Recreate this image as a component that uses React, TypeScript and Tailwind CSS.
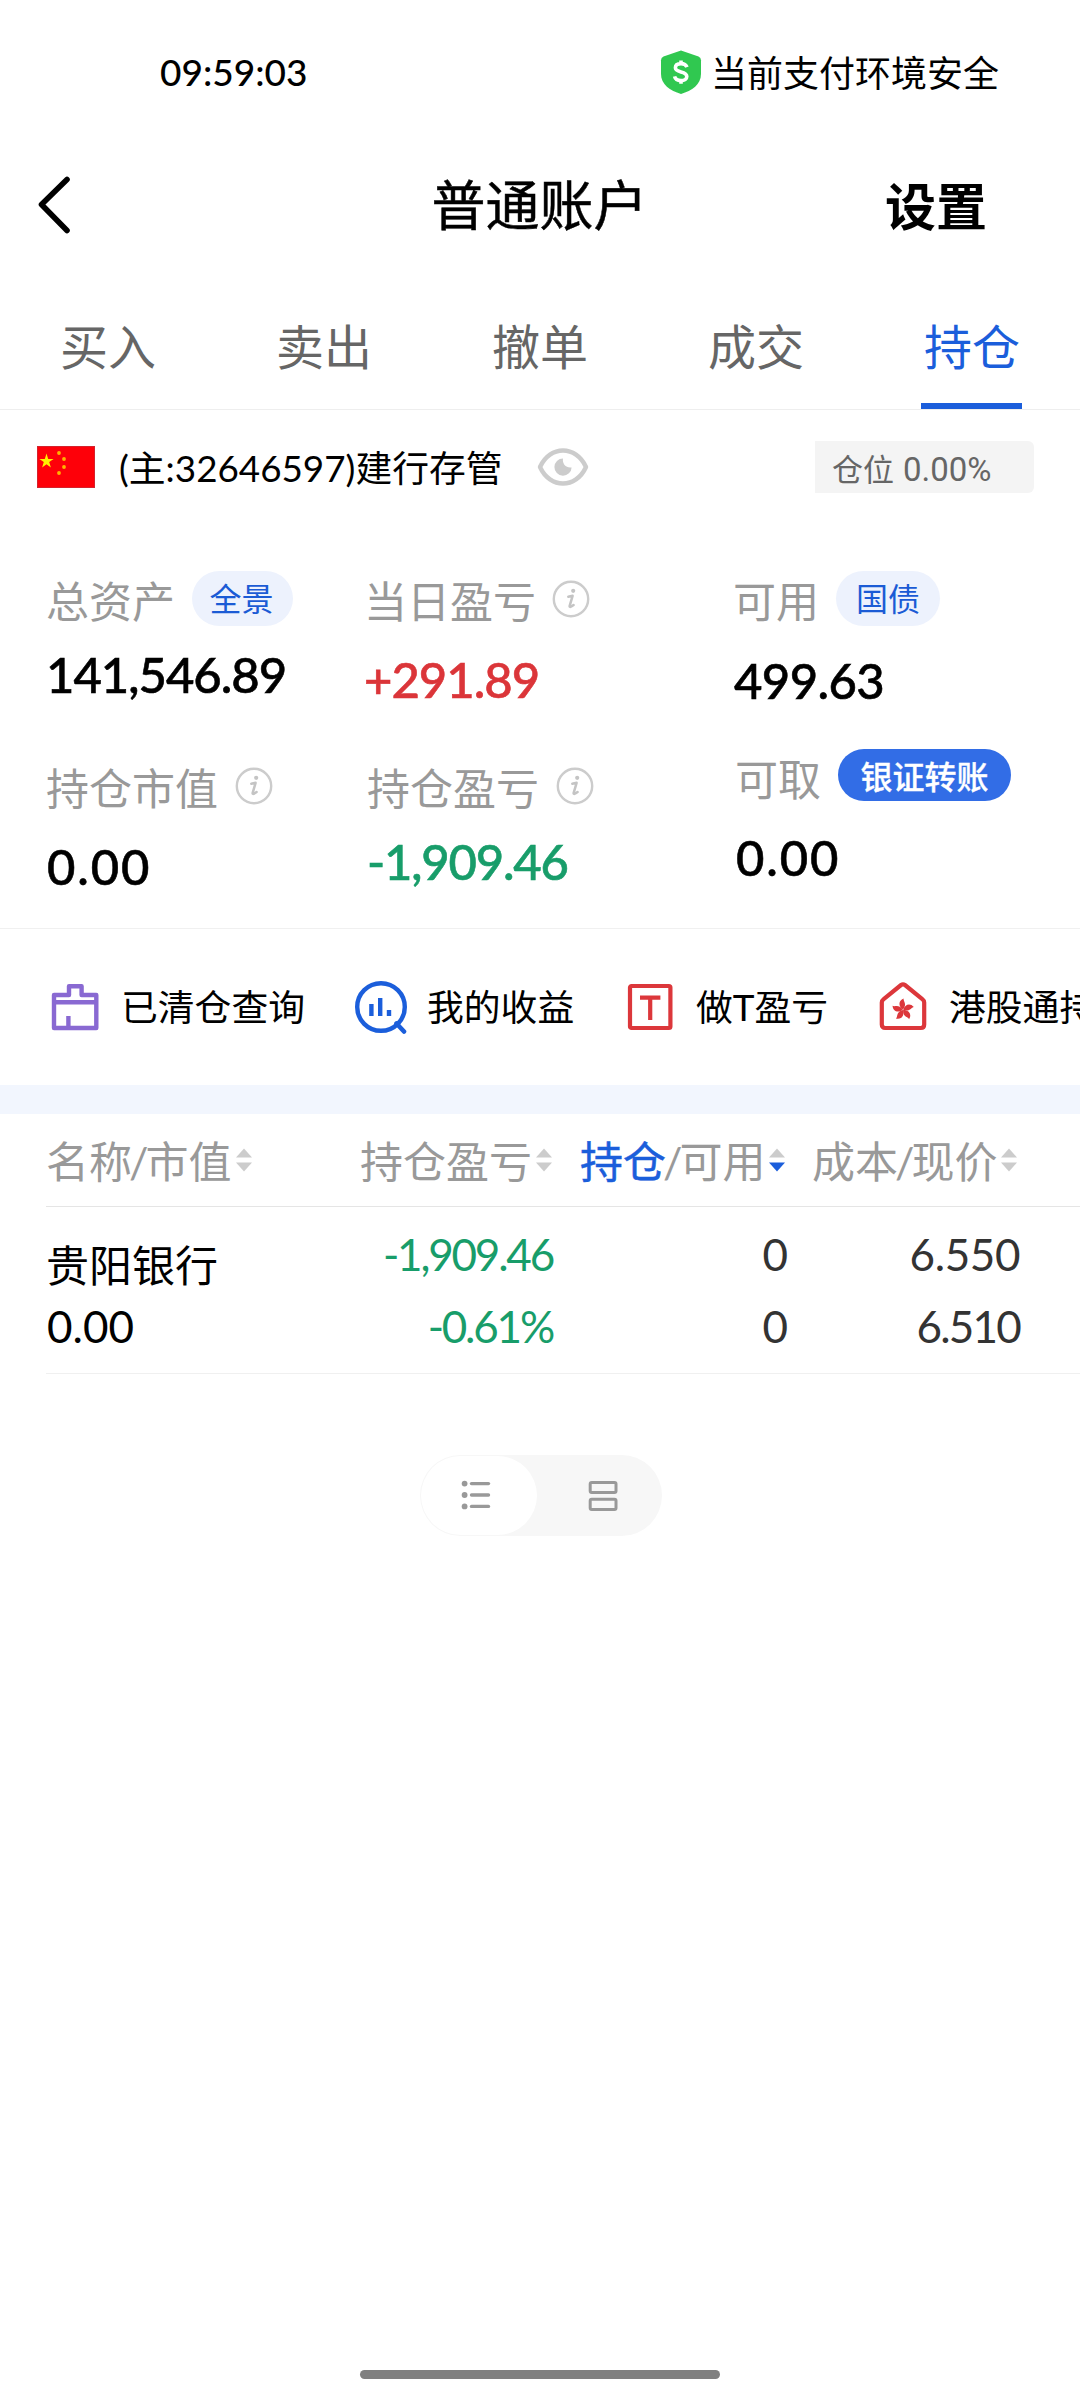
import React from 'react';
import clsx from 'clsx';

function ShieldIcon() {
  return (
    <svg width="42" height="44" viewBox="0 0 42 44" className="shrink-0 -translate-y-px">
      <path d="M21 0.5 L38.5 6.6 Q41 7.6 41 10.2 V24 C41 34.5 32 40.5 21 44 C10 40.5 1 34.5 1 24 V10.2 Q1 7.6 3.5 6.6 Z" fill="#30c850" />
      <path d="M27 17.2 C26 14.6 24 13.6 21 13.6 C17.6 13.6 15.4 15.2 15.4 17.8 C15.4 23.4 26.8 20.4 26.8 26.4 C26.8 29 24.4 30.6 21 30.6 C17.6 30.6 15.2 29.2 14.6 26.4 M21 10.5 V14 M21 30 V33.8" fill="none" stroke="#fff" strokeWidth="3.6" />
    </svg>
  );
}

function FlagIcon() {
  const small = [[22, 7], [27, 13], [27, 21], [22, 27]];
  return (
    <svg width="58" height="42" viewBox="0 0 58 42" className="shrink-0 -translate-y-px">
      <rect width="58" height="42" fill="#fe0009" />
      <rect x="0.5" y="0.5" width="57" height="41" fill="none" stroke="#d5222c" strokeWidth="1" />
      <path d="M9.5 7.5 L11.2 12.9 H16.6 L12.2 16.1 L13.9 21.6 L9.5 18.3 L5.1 21.6 L6.8 16.1 L2.4 12.9 H7.8 Z" fill="#fff000" />
      {small.map(([x, y], i) => (
        <circle key={i} cx={x} cy={y} r="1.9" fill="#ffb400" />
      ))}
    </svg>
  );
}

function EyeIcon() {
  return (
    <svg width="52" height="38" viewBox="0 0 52 38" className="shrink-0 -translate-y-px">
      <path d="M3 19 C8 8 17 2.5 26 2.5 C35 2.5 44 8 49 19 C44 30 35 35.5 26 35.5 C17 35.5 8 30 3 19 Z" fill="none" stroke="#ccc" strokeWidth="4.4" strokeLinejoin="round" />
      <path d="M26 10.5 A8.6 8.6 0 1 0 34.6 19.4 C29.5 20.4 25 16 26 10.5 Z" fill="#ccc" />
    </svg>
  );
}

function InfoIcon() {
  return (
    <svg width="38" height="38" viewBox="0 0 38 38" className="shrink-0">
      <circle cx="19" cy="19" r="17.2" fill="none" stroke="#ccc" strokeWidth="2.4" />
      <circle cx="21.2" cy="10.8" r="2.1" fill="#c4c4c4" />
      <path d="M16.3 16.8 L20.6 15.8 L17.6 26.2 Q17.6 28 21.6 25" fill="none" stroke="#c4c4c4" strokeWidth="2.5" strokeLinecap="round" strokeLinejoin="round" />
    </svg>
  );
}

function ClearedIcon() {
  return (
    <svg width="48" height="48" viewBox="0 0 48 48" className="shrink-0">
      <path d="M3 45 V12 H18 V3.2 H30.6 V12 H45.3 V45 Z M3 19.3 H45.3 M17.4 33 V45" fill="none" stroke="#8969d2" strokeWidth="4.4" strokeLinejoin="round" />
    </svg>
  );
}

function ProfitIcon() {
  return (
    <svg width="54" height="54" viewBox="0 0 54 54" className="shrink-0">
      <circle cx="27" cy="27" r="23.8" fill="none" stroke="#1b5edb" strokeWidth="4.4" />
      <path d="M42.5 43.5 L50 51.5" stroke="#1b5edb" strokeWidth="4.6" strokeLinecap="round" />
      <path d="M17.4 24 V36 M26.2 18 V36 M35 30 V36" stroke="#1b5edb" strokeWidth="4.4" />
    </svg>
  );
}

function TIcon() {
  return (
    <svg width="46" height="48" viewBox="0 0 46 48" className="shrink-0">
      <rect x="3" y="3" width="40.4" height="42" rx="1.5" fill="none" stroke="#dc373b" strokeWidth="4.2" />
      <path d="M13 14.6 H33.4 M23.2 14.6 V37" stroke="#dc373b" strokeWidth="4.2" />
    </svg>
  );
}

function HkIcon() {
  return (
    <svg width="48" height="50" viewBox="0 0 48 50" className="shrink-0 -translate-y-px">
      <path d="M2.8 21.5 Q2.8 19.6 4.4 18.4 L22 4 Q24 2.6 26 4 L43.6 18.4 Q45.2 19.6 45.2 21.5 V43.5 Q45.2 47 41.8 47 H6.2 Q2.8 47 2.8 43.5 Z" fill="none" stroke="#dc373b" strokeWidth="4.2" />
      {[0, 72, 144, 216, 288].map((a) => (
        <path key={a} d="M24 28.6 C19.2 25.4 19.2 19.8 24.6 17.6 C24 20.4 28.6 23 24 28.6 Z" fill="#dc373b" transform={`rotate(${a} 24 28.8)`} />
      ))}
    </svg>
  );
}

function SortIcon({ down = false }: { down?: boolean }) {
  return (
    <svg width="18" height="24" viewBox="0 0 18 24" className="shrink-0">
      <path d="M9 0.5 L17 9.5 H1 Z" fill="#ccc" />
      <path d="M1 14.5 H17 L9 23.5 Z" fill={down ? '#1b5edb' : '#ccc'} />
    </svg>
  );
}

const tabs = ['买入', '卖出', '撤单', '成交', '持仓'];

function Label({ children }: { children: React.ReactNode }) {
  return <span className="pt-[6px] text-[43px] leading-[40px] text-[#999]">{children}</span>;
}

function Value({ children, className }: { children: React.ReactNode; className?: string }) {
  return <div className={clsx('-translate-y-px text-[49px] leading-[50px] font-medium [-webkit-text-stroke:0.6px_currentColor]', className)}>{children}</div>;
}

function Slash() {
  return <span className="-mx-[3px]">/</span>;
}

export default function App() {
  return (
    <div className="flex h-[2400px] w-[1080px] flex-col overflow-hidden bg-white font-['Lato','Noto_Sans_CJK_SC',sans-serif] whitespace-nowrap text-black">
      {/* status bar */}
      <div className="flex h-[145px] items-center justify-between pr-[81px] pl-[160px]">
        <span className="pb-[2px] text-[37px] leading-none font-medium">09:59:03</span>
        <div className="flex items-center gap-[9px]">
          <ShieldIcon />
          <span className="pt-px text-[36px] leading-none">当前支付环境安全</span>
        </div>
      </div>

      {/* title */}
      <header className="grid h-[122px] grid-cols-[1fr_auto_1fr] items-center pr-[93px] pl-[36px]">
        <svg width="36" height="60" viewBox="0 0 36 60" className="-translate-y-px">
          <path d="M31 4.5 L5.5 29.5 L31 55.5" fill="none" stroke="#000" strokeWidth="5.6" strokeLinecap="round" strokeLinejoin="round" />
        </svg>
        <h1 className="translate-x-[28px] text-[54px] leading-none [-webkit-text-stroke:0.5px_currentColor]">普通账户</h1>
        <span className="justify-self-end text-[51px] leading-none font-bold">设置</span>
      </header>

      {/* tabs */}
      <nav className="grid h-[143px] grid-cols-5 border-b border-[#eee]">
        {tabs.map((tab, i) => (
          <div key={tab} className={clsx('flex flex-col items-center justify-between pt-[50px] text-[48px] leading-[60px]', i === 4 ? 'text-[#1b5edb]' : 'text-[#666]')}>
            {tab}
            {i === 4 && <div className="mr-[2px] h-[6px] w-[101px] bg-[#1b5edb]" />}
          </div>
        ))}
      </nav>

      {/* account */}
      <div className="flex h-[118px] items-center pr-[46px] pb-[3px] pl-[37px]">
        <FlagIcon />
        <span className="ml-[24px] pt-px text-[36.8px] leading-none">(主:32646597)建行存管</span>
        <span className="ml-[34px]">
          <EyeIcon />
        </span>
        <div className="ml-auto flex h-[52px] w-[219px] -translate-y-px items-center gap-[9px] rounded-r-[6px] bg-[#f4f4f4] pt-[5px] pl-[17px] text-[#666]">
          <span className="text-[31px] leading-none">仓位</span>
          <span className="font-['Roboto',sans-serif] text-[33px] leading-none">0.00%</span>
        </div>
      </div>

      {/* assets */}
      <section className="flex h-[401px] border-b border-[#f0f0f0] pt-[43px] pl-[46px]">
        <div className="w-[318px]">
          <div className="flex h-[55px] items-center">
            <Label>总资产</Label>
            <span className="ml-[17px] flex h-[55px] w-[101px] items-center justify-center rounded-full bg-[#edf2fd] pt-px pr-[2px] text-[32px] leading-none text-[#1b5bd5]">全景</span>
          </div>
          <Value className="mt-[24px] tracking-[-1px]">141,546.89</Value>
          <div className="mt-[66px] flex h-[40px] items-center">
            <Label>持仓市值</Label>
            <span className="ml-[17px]"><InfoIcon /></span>
          </div>
          <Value className="mt-[36px] pl-px tracking-[1.9px]">0.00</Value>
        </div>

        <div className="w-[369px]">
          <div className="flex h-[55px] items-center">
            <Label>当日盈亏</Label>
            <span className="ml-[16px]"><InfoIcon /></span>
          </div>
          <Value className="mt-[29px] tracking-[-1px] text-[#db3539]">+291.89</Value>
          <div className="mt-[61px] flex h-[40px] items-center pl-[3px]">
            <Label>持仓盈亏</Label>
            <span className="ml-[17px]"><InfoIcon /></span>
          </div>
          <Value className="mt-[31px] pl-[3px] tracking-[-1.2px] text-[#189d6a]">-1,909.46</Value>
        </div>

        <div>
          <div className="flex h-[55px] items-center">
            <Label>可用</Label>
            <span className="ml-[17px] flex h-[55px] w-[104px] items-center justify-center rounded-full bg-[#edf2fd] pt-px text-[32px] leading-none text-[#1b5bd5]">国债</span>
          </div>
          <Value className="mt-[30px] pl-px tracking-[-0.6px]">499.63</Value>
          <div className="mt-[43px] flex h-[52px] items-center pl-[2px]">
            <div className="flex pt-[4px]"><Label>可取</Label></div>
            <span className="ml-[17px] flex h-[52px] w-[173px] items-center justify-center rounded-full bg-[#326de6] pt-[3px] text-[32px] leading-none font-medium text-white [-webkit-text-stroke:0.3px_currentColor]">银证转账</span>
          </div>
          <Value className="mt-[32px] pl-[3px] tracking-[1.9px]">0.00</Value>
        </div>
      </section>

      {/* shortcuts */}
      <div className="flex h-[156px] items-center overflow-hidden pl-[51px] text-[36.8px] leading-none">
        <div className="flex w-[303px] shrink-0 items-center gap-[22px]">
          <ClearedIcon />
          <span>已清仓查询</span>
        </div>
        <div className="flex w-[273px] shrink-0 items-center gap-[19px]">
          <ProfitIcon />
          <span>我的收益</span>
        </div>
        <div className="flex w-[252px] shrink-0 items-center gap-[23px]">
          <TIcon />
          <span>做T盈亏</span>
        </div>
        <div className="flex shrink-0 items-center gap-[22px]">
          <HkIcon />
          <span>港股通持仓</span>
        </div>
      </div>

      <div className="h-[29px] bg-[#f2f6fe]" />

      {/* holdings */}
      <div className="ml-[46px] flex h-[93px] items-center border-b border-[#e5e5e5] text-[43px] leading-none text-[#999]">
        <div className="flex w-[314px] items-center gap-[4px]">
          <span className="pt-[3px]">名称<Slash />市值</span>
          <SortIcon />
        </div>
        <div className="flex w-[220px] items-center gap-[3px]">
          <span className="pt-[3px]">持仓盈亏</span>
          <SortIcon />
        </div>
        <div className="flex w-[232px] items-center gap-[3px]">
          <span className="pt-[3px]"><span className="text-[#1b5edb] [-webkit-text-stroke:0.5px_currentColor]">持仓</span><Slash />可用</span>
          <SortIcon down />
        </div>
        <div className="flex items-center gap-[3px]">
          <span className="pt-[3px]">成本<Slash />现价</span>
          <SortIcon />
        </div>
      </div>
      <div className="ml-[46px] flex h-[167px] border-b border-[#f0f0f0] text-[44px] leading-[50px]">
        <div className="w-[209px] pt-[34px]">
          <div className="text-[43px]">贵阳银行</div>
          <div className="mt-[10px] pl-px">0.00</div>
        </div>
        <div className="flex w-[298px] flex-col items-end gap-[22px] pt-[22px] text-[#189d6a]">
          <span className="tracking-[-2.2px]">-1,909.46</span>
          <span className="tracking-[-2.2px]">-0.61%</span>
        </div>
        <div className="flex w-[235px] flex-col items-end gap-[22px] pt-[22px] text-[#333]">
          <span>0</span>
          <span>0</span>
        </div>
        <div className="flex w-[232px] flex-col items-end gap-[22px] pt-[22px] text-[#333]">
          <span className="tracking-[-0.4px]">6.550</span>
          <span className="tracking-[-1.8px]">6.510</span>
        </div>
      </div>

      {/* list / card switch */}
      <div className="mt-[81px] ml-[420px] flex h-[81px] w-[242px] items-center rounded-full bg-[#f7f7f7] p-px">
        <div className="flex h-[79px] w-[116px] items-center justify-center rounded-full bg-white">
          <svg width="30" height="30" viewBox="0 0 30 30" className="mr-[6px] mb-[2px]">
            {[3.6, 15, 26.4].map((y) => (
              <g key={y}>
                <circle cx="3.6" cy={y} r="2.9" fill="#999" />
                <path d={`M10.5 ${y} H27.5`} stroke="#999" strokeWidth="3.4" strokeLinecap="round" />
              </g>
            ))}
          </svg>
        </div>
        <svg width="30" height="32" viewBox="0 0 30 32" className="ml-[51px]">
          <rect x="2.2" y="2.4" width="25.8" height="10.2" rx="1.5" fill="none" stroke="#999" strokeWidth="3" />
          <rect x="2.2" y="19.2" width="25.8" height="10.2" rx="1.5" fill="none" stroke="#999" strokeWidth="3" />
        </svg>
      </div>

      <div className="mx-auto mt-auto mb-[21px] h-[9px] w-[360px] rounded-full bg-[#808080]" />
    </div>
  );
}
